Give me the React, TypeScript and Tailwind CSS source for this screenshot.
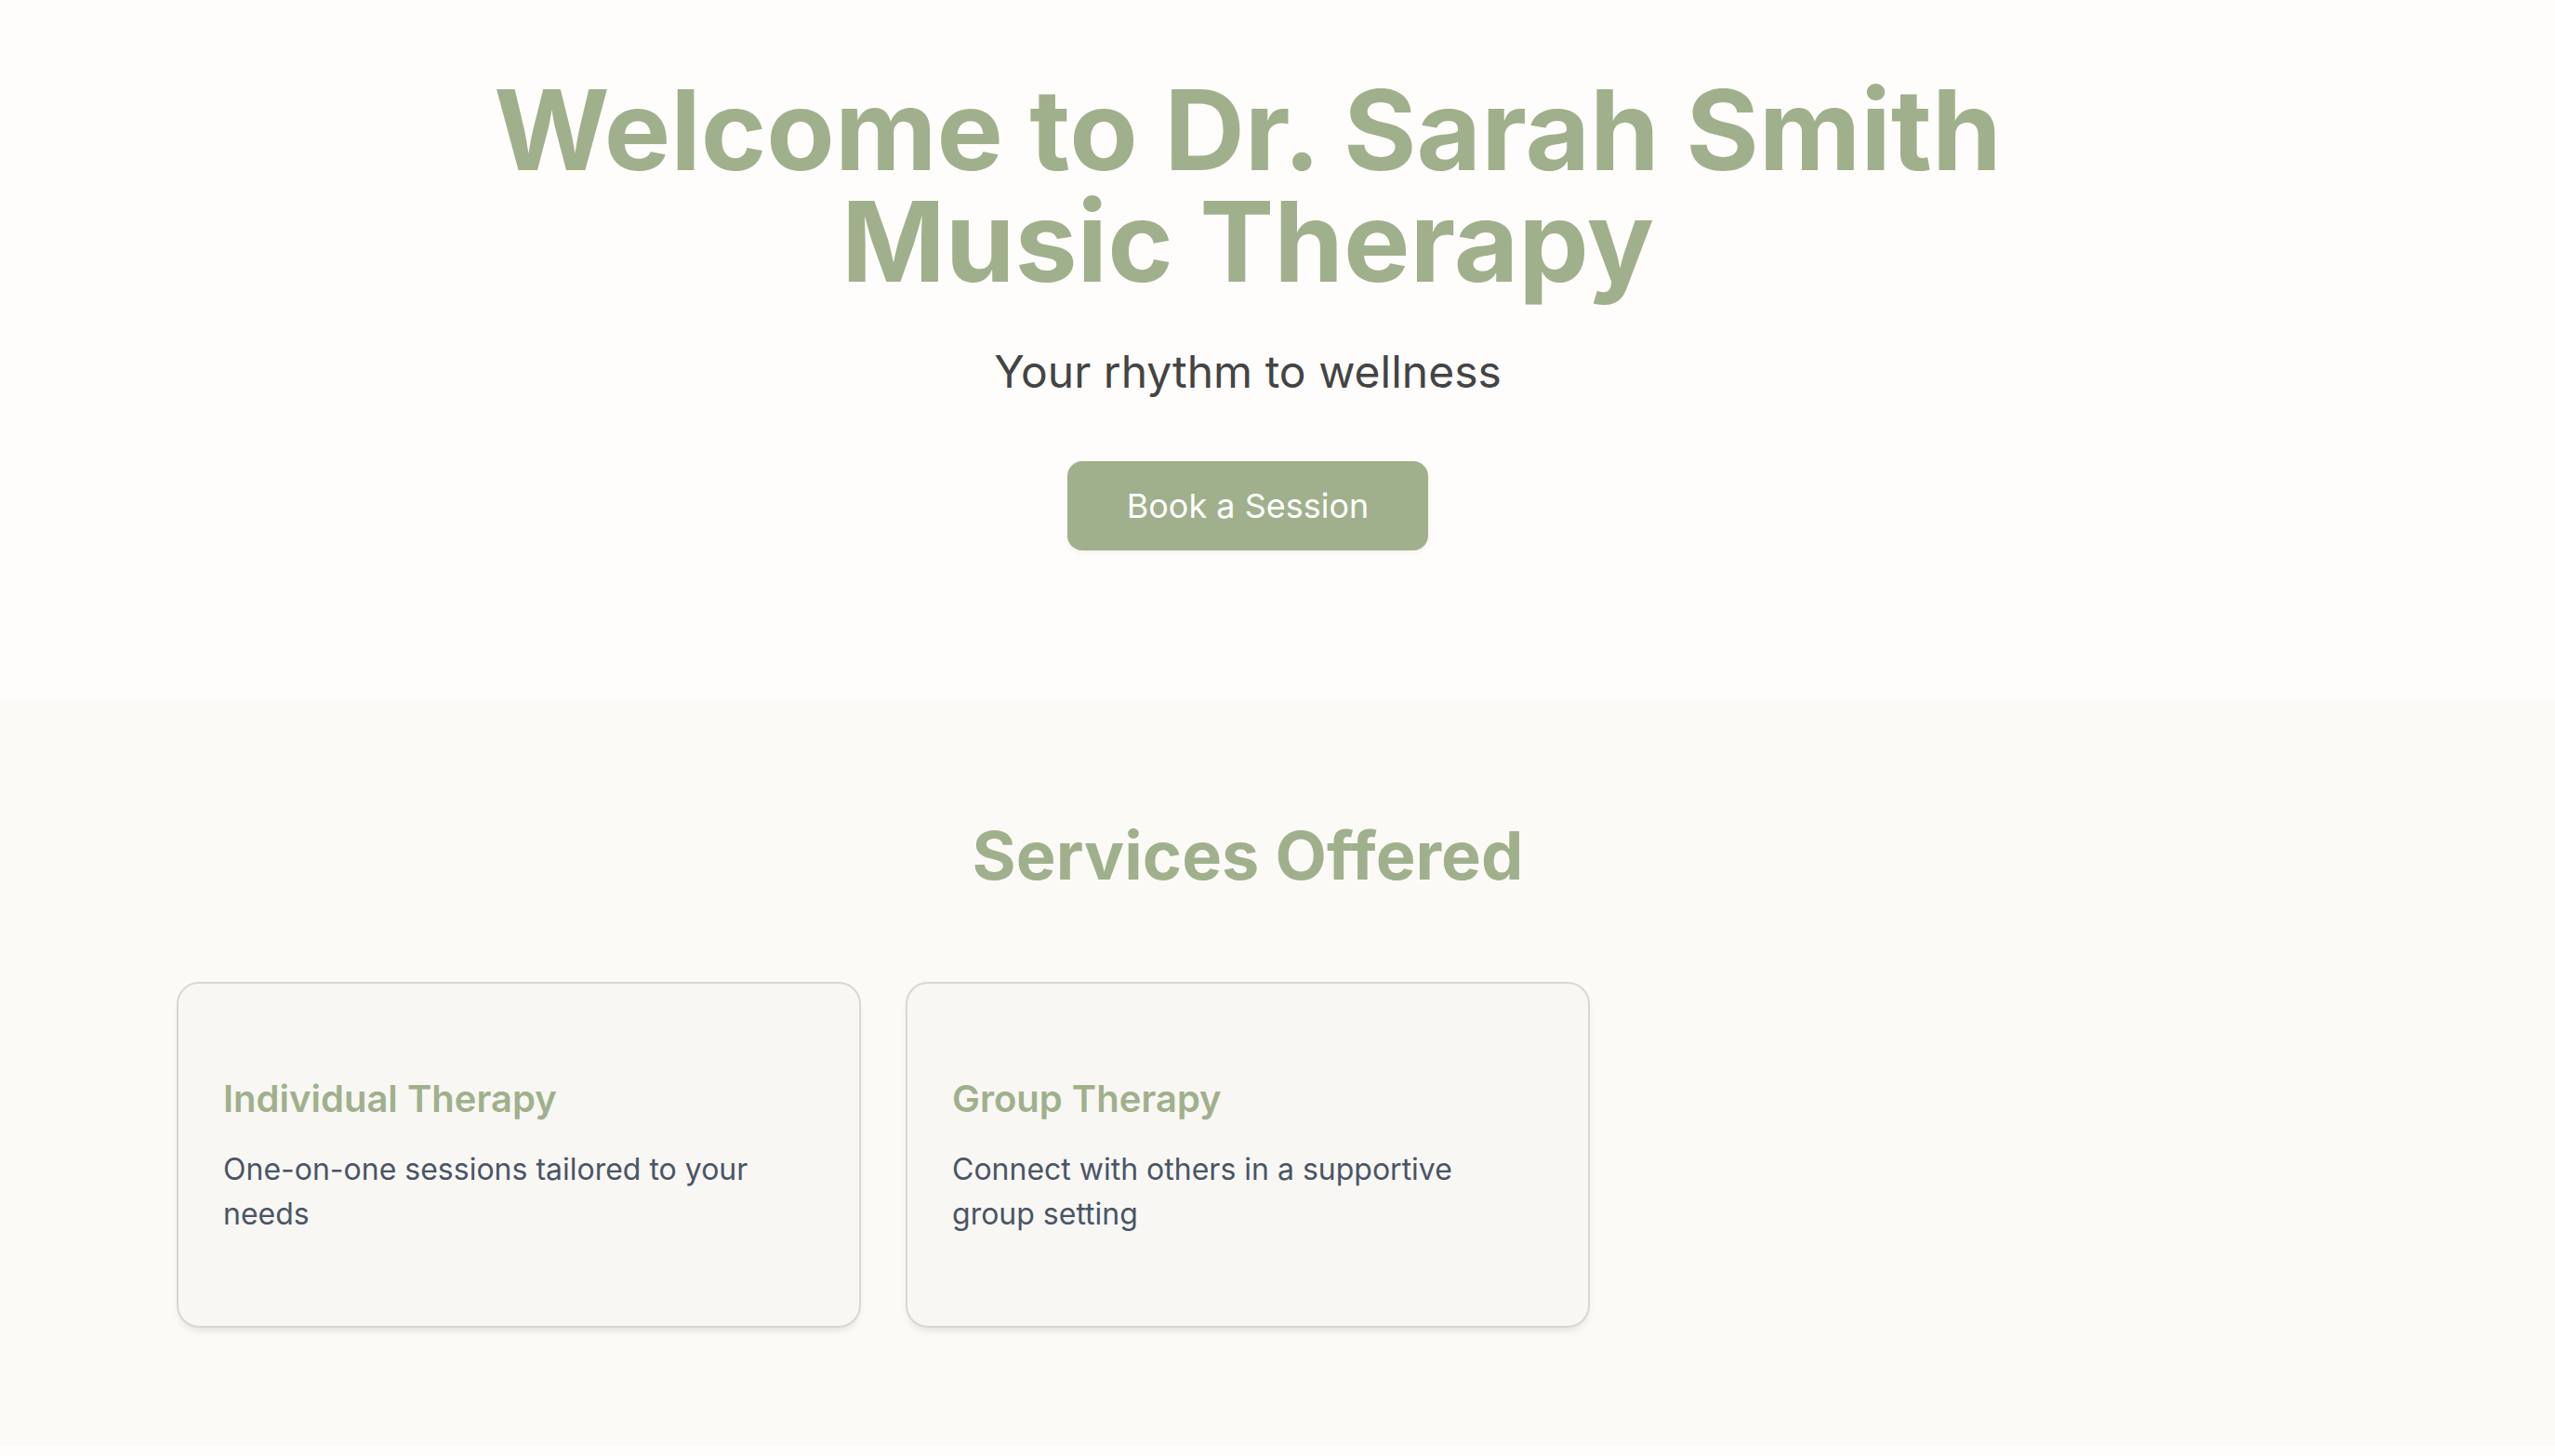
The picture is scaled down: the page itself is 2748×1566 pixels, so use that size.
const services = [
  {
    title: "Individual Therapy",
    text: "One-on-one sessions tailored to your needs",
  },
  {
    title: "Group Therapy",
    text: "Connect with others in a supportive group setting",
  },
];

export default function App() {
  return (
    <div className="min-h-screen bg-[#fefdfb] font-['Inter','Noto_Sans',sans-serif]">
      {/* hero */}
      <section className="bg-[#fefdfb] pr-16 pt-20 pb-40">
        <div className="mx-auto max-w-[1792px] px-8 text-center">
          <h1 className="text-[120px] font-bold leading-none text-[#a0b08c]">
            Welcome to Dr. Sarah Smith Music Therapy
          </h1>
          <p className="mt-12 text-[48px] leading-[64px] text-[#444444]">
            Your rhythm to wellness
          </p>
          <button className="mt-16 rounded-2xl bg-[#a0b08c] px-16 py-5 text-[36px] leading-[56px] text-white shadow-[0_2px_6px_rgba(0,0,0,0.06)]">
            Book a Session
          </button>
        </div>
      </section>

      {/* services */}
      <section className="bg-[#fbfaf7] pr-16 py-32">
        <div className="mx-auto max-w-[2304px]">
          <h2 className="mb-24 text-center text-[72px] font-bold leading-[80px] text-[#a0b08c]">
            Services Offered
          </h2>
          <div className="grid grid-cols-3 gap-12">
            {services.map((s) => (
              <div
                key={s.title}
                className="rounded-3xl border-2 border-[#dbd7cf] bg-[#f8f7f4] py-24 pl-12 pr-[54px] shadow-[0_6px_10px_-4px_rgba(0,0,0,0.12)]"
              >
                <h3 className="text-[40px] font-semibold leading-[56px] text-[#a0b08c]">
                  {s.title}
                </h3>
                <p className="mt-6 text-[32px] leading-[48px] text-[#4a5565]">
                  {s.text}
                </p>
              </div>
            ))}
          </div>
        </div>
      </section>

      <section className="h-[200px] bg-[#fefdfb]" />
    </div>
  );
}
